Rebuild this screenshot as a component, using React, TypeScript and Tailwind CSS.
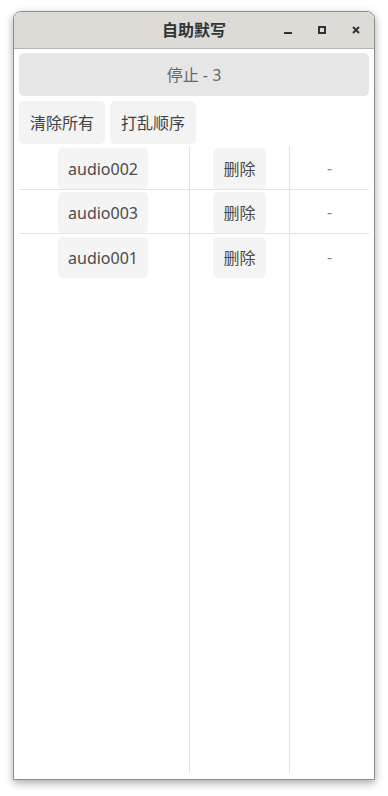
import React from "react";

const rows = ["audio002", "audio003", "audio001"];

const font = { fontFamily: '"Noto Sans", "Noto Sans CJK SC", sans-serif' };

const App = () => {
  return (
    <div className="w-[388px] h-[796px] bg-white pt-[11px] pl-[13px]" style={font}>
      <div className="w-[362px] h-[769px] flex flex-col rounded-t-[8px] border border-[#8e8e8e] bg-white shadow-[0_3px_9px_rgba(0,0,0,0.35)] overflow-hidden">
        {/* Title bar */}
        <div className="relative h-[37px] shrink-0 flex items-center justify-center bg-[#dedad6] border-b border-[#b9b4ae]">
          <span className="text-[16px] font-bold text-[#2e3436] leading-none">自助默写</span>
          <div className="absolute right-[14px] top-0 h-full flex items-center gap-[26px]">
            <svg width="8" height="8" viewBox="0 0 8 8">
              <rect x="0" y="6" width="8" height="2" fill="#2e3436" />
            </svg>
            <svg width="8" height="8" viewBox="0 0 8 8">
              <rect x="1" y="1" width="6" height="6" fill="none" stroke="#2e3436" strokeWidth="2" />
            </svg>
            <svg width="8" height="8" viewBox="0 0 8 8">
              <path d="M1 1 L7 7 M7 1 L1 7" stroke="#2e3436" strokeWidth="2" />
            </svg>
          </div>
        </div>

        {/* Content */}
        <div className="flex-1 flex flex-col px-[5px] pt-[4px] pb-[6px] min-h-0">
          <button className="h-[43px] w-full rounded-[5px] bg-[#e6e6e6] text-[16px] text-[#666]">停止 - 3</button>
          <div className="flex gap-[5px] mt-[5px]">
            <button className="h-[43px] w-[86px] rounded-[5px] bg-[#f3f3f3] text-[16px] text-[#444]">清除所有</button>
            <button className="h-[43px] w-[86px] rounded-[5px] bg-[#f3f3f3] text-[16px] text-[#444]">打乱顺序</button>
          </div>

          {/* Table */}
          <div className="flex-1 flex mt-[2px]">
            <div className="w-[170px] flex flex-col">
              {rows.map((r, i) => (
                <div key={r} className={`h-[44px] flex items-end justify-center pr-[2px] ${i < 2 ? "border-b border-[#e2e2e2]" : ""}`}>
                  <button className="h-[41px] w-[90px] rounded-[5px] bg-[#f4f4f4] text-[16px] text-[#4a4a4a]">{r}</button>
                </div>
              ))}
            </div>
            <div className="w-[100px] flex flex-col border-l border-[#e2e2e2]">
              {rows.map((r, i) => (
                <div key={r} className={`h-[44px] flex items-end justify-center ${i < 2 ? "border-b border-[#e2e2e2]" : ""}`}>
                  <button className="h-[41px] w-[53px] rounded-[5px] bg-[#f4f4f4] text-[16px] text-[#4a4a4a]">删除</button>
                </div>
              ))}
            </div>
            <div className="flex-1 flex flex-col border-l border-[#e2e2e2]">
              {rows.map((r, i) => (
                <div key={r} className={`h-[44px] flex items-center justify-center pt-[1px] text-[16px] text-[#888] ${i < 2 ? "border-b border-[#e2e2e2]" : ""}`}>
                  -
                </div>
              ))}
            </div>
          </div>
        </div>
      </div>
    </div>
  );
};

export default App;
